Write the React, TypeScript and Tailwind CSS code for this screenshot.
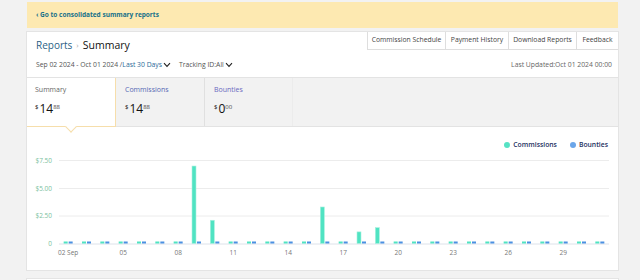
import React from "react";

const font = "font-['Open_Sans','Noto_Sans',sans-serif]";

const headerLinks = [
  { label: "Commission Schedule", w: "w-[78px]" },
  { label: "Payment History", w: "w-[63px]" },
  { label: "Download Reports", w: "w-[68px]" },
  { label: "Feedback", w: "w-[42px]" },
];

// one value per day, 02 Sep .. 01 Oct
const days = Array.from({ length: 30 }, (_, i) => {
  const v: Record<number, number> = { 7: 7.0, 8: 2.1, 14: 3.3, 16: 1.05, 17: 1.43 };
  return v[i] ?? 0;
});

const xLabels = [
  { i: 0, t: "02 Sep" },
  { i: 3, t: "05" },
  { i: 6, t: "08" },
  { i: 9, t: "11" },
  { i: 12, t: "14" },
  { i: 15, t: "17" },
  { i: 18, t: "20" },
  { i: 21, t: "23" },
  { i: 24, t: "26" },
  { i: 27, t: "29" },
];

function Chevron() {
  return (
    <svg width="8" height="6" viewBox="0 0 8 6" className="ml-[1px]">
      <path d="M1 1.2 L4 4.4 L7 1.2" fill="none" stroke="#222" strokeWidth="1.1" />
    </svg>
  );
}

function Money({ whole, cents }: { whole: string; cents: string }) {
  return (
    <div className="flex items-start text-[#111] mt-[8px]">
      <span className="text-[6px] leading-[8px] mr-[1px]">$</span>
      <span className="text-[12px] leading-[12px]">{whole}</span>
      <span className="text-[6px] leading-[8px] text-[#444]">{cents}</span>
    </div>
  );
}

function Chart() {
  const x0 = 59;
  const slot = 550 / 30;
  const zero = 243.5;
  const perDollar = 83 / 7.5;
  const grid = [
    { y: 160.5, t: "$7.50" },
    { y: 188.5, t: "$5.00" },
    { y: 216, t: "$2.50" },
  ];
  return (
    <svg width="591" height="106" viewBox="27 152 591 106" className="block mt-[2px]">
      {grid.map((g) => (
        <g key={g.t}>
          <line x1={x0} x2={609} y1={g.y} y2={g.y} stroke="#ececec" strokeWidth="1" />
          <text x="52" y={g.y + 2.2} textAnchor="end" fontSize="6.5" fill="#7cbf9e" fontFamily="Open Sans, sans-serif">
            {g.t}
          </text>
        </g>
      ))}
      <text x="52" y={zero + 2} textAnchor="end" fontSize="6.5" fill="#7cbf9e" fontFamily="Open Sans, sans-serif">
        0
      </text>
      <line x1={x0} x2={609} y1={zero + 0.5} y2={zero + 0.5} stroke="#dde2ea" strokeWidth="1" />
      {days.map((v, i) => {
        const c = x0 + slot * i + slot / 2;
        const h = Math.max(2, v * perDollar);
        return (
          <g key={i}>
            <rect
              x={c - 4.5}
              y={zero - h}
              width="4"
              height={h}
              fill="#50e3c2"
              stroke={v > 0 ? "#a8f0df" : "none"}
              strokeWidth="0.6"
            />
            <rect x={c + 0.5} y={zero - 2} width="4" height="2" fill="#4a90e2" />
          </g>
        );
      })}
      {xLabels.map((l) => (
        <text
          key={l.t}
          x={x0 + slot * l.i + slot / 2}
          y="254.5"
          textAnchor="middle"
          fontSize="6.5"
          fill="#777"
          fontFamily="Open Sans, sans-serif"
        >
          {l.t}
        </text>
      ))}
    </svg>
  );
}

export default function App() {
  return (
    <div className={`w-[640px] h-[280px] overflow-hidden bg-[#f2f2f2] pt-[2px] ${font}`}>
      <div className="w-[591px] ml-[27px]">
        <div className="h-[26px] bg-[#fde9b1] flex items-center pl-[9px]">
          <span className="text-[6.5px] font-bold text-[#16708a]">‹ Go to consolidated summary reports</span>
        </div>

        <div className="mt-[4px] bg-white ring-1 ring-[#e4e4e4] h-[238px]">
          <div className="flex justify-between items-start h-[20px]">
            <div className="pl-[9px] pt-[6px] flex items-center leading-[14px]">
              <span className="text-[10px] text-[#2b5f86]">Reports</span>
              <span className="text-[8px] text-[#aaa] mx-[4px]">›</span>
              <span className="text-[10.5px] text-[#111]">Summary</span>
            </div>
            <div className="flex">
              {headerLinks.map((l) => (
                <div
                  key={l.label}
                  className={`${l.w} h-[18px] border-l border-b border-[#dedede] flex items-center justify-center text-[6.8px] text-[#444] whitespace-nowrap`}
                >
                  {l.label}
                </div>
              ))}
            </div>
          </div>

          <div className="h-[25px] flex items-center justify-between pl-[9px] pr-[6px] pt-[1px] text-[6.8px] text-[#555]">
            <div className="flex items-center">
              <span>Sep 02 2024 - Oct 01 2024 /</span>
              <span className="text-[#2b6a98]">Last 30 Days</span>
              <Chevron />
              <span className="ml-[8px]">Tracking ID:All</span>
              <Chevron />
            </div>
            <span className="text-[#666]">Last Updated:Oct 01 2024 00:00</span>
          </div>

          <div className="h-[50px] flex bg-[#f2f2f2] border-t border-[#e3e3e3]">
            <div className="relative w-[89px] bg-white border-r border-b border-[#f6deab] pl-[8px] pt-[7px]">
              <div className="text-[7px] leading-[10px] text-[#666]">Summary</div>
              <Money whole="14" cents="88" />
              <div className="absolute left-1/2 -bottom-[5px] -ml-[4px] w-[8px] h-[8px] bg-white border-r border-b border-[#f6deab] rotate-45" />
            </div>
            <div className="flex-1 flex border-b border-[#e3e3e3]">
              <div className="w-[89px] border-r border-[#e0e0e0] pl-[9px] pt-[7px]">
                <div className="text-[7px] leading-[10px] text-[#5468b4]">Commissions</div>
                <Money whole="14" cents="88" />
              </div>
              <div className="w-[88px] border-r border-[#ececec] pl-[9px] pt-[7px]">
                <div className="text-[7px] leading-[10px] text-[#6a69c0]">Bounties</div>
                <Money whole="0" cents="00" />
              </div>
            </div>
          </div>

          <div className="mt-[13px] h-[10px] flex items-center justify-end pr-[10px] text-[6.8px] font-semibold text-[#232f5e]">
            <span className="w-[6px] h-[6px] rounded-full bg-[#56e2c4]" />
            <span className="ml-[3px]">Commissions</span>
            <span className="ml-[13px] w-[6px] h-[6px] rounded-full bg-[#6ba6ea]" />
            <span className="ml-[3px]">Bounties</span>
          </div>

          <Chart />
        </div>

        <div className="mt-[9px] h-[20px] bg-white ring-1 ring-[#e4e4e4]" />
      </div>
    </div>
  );
}
